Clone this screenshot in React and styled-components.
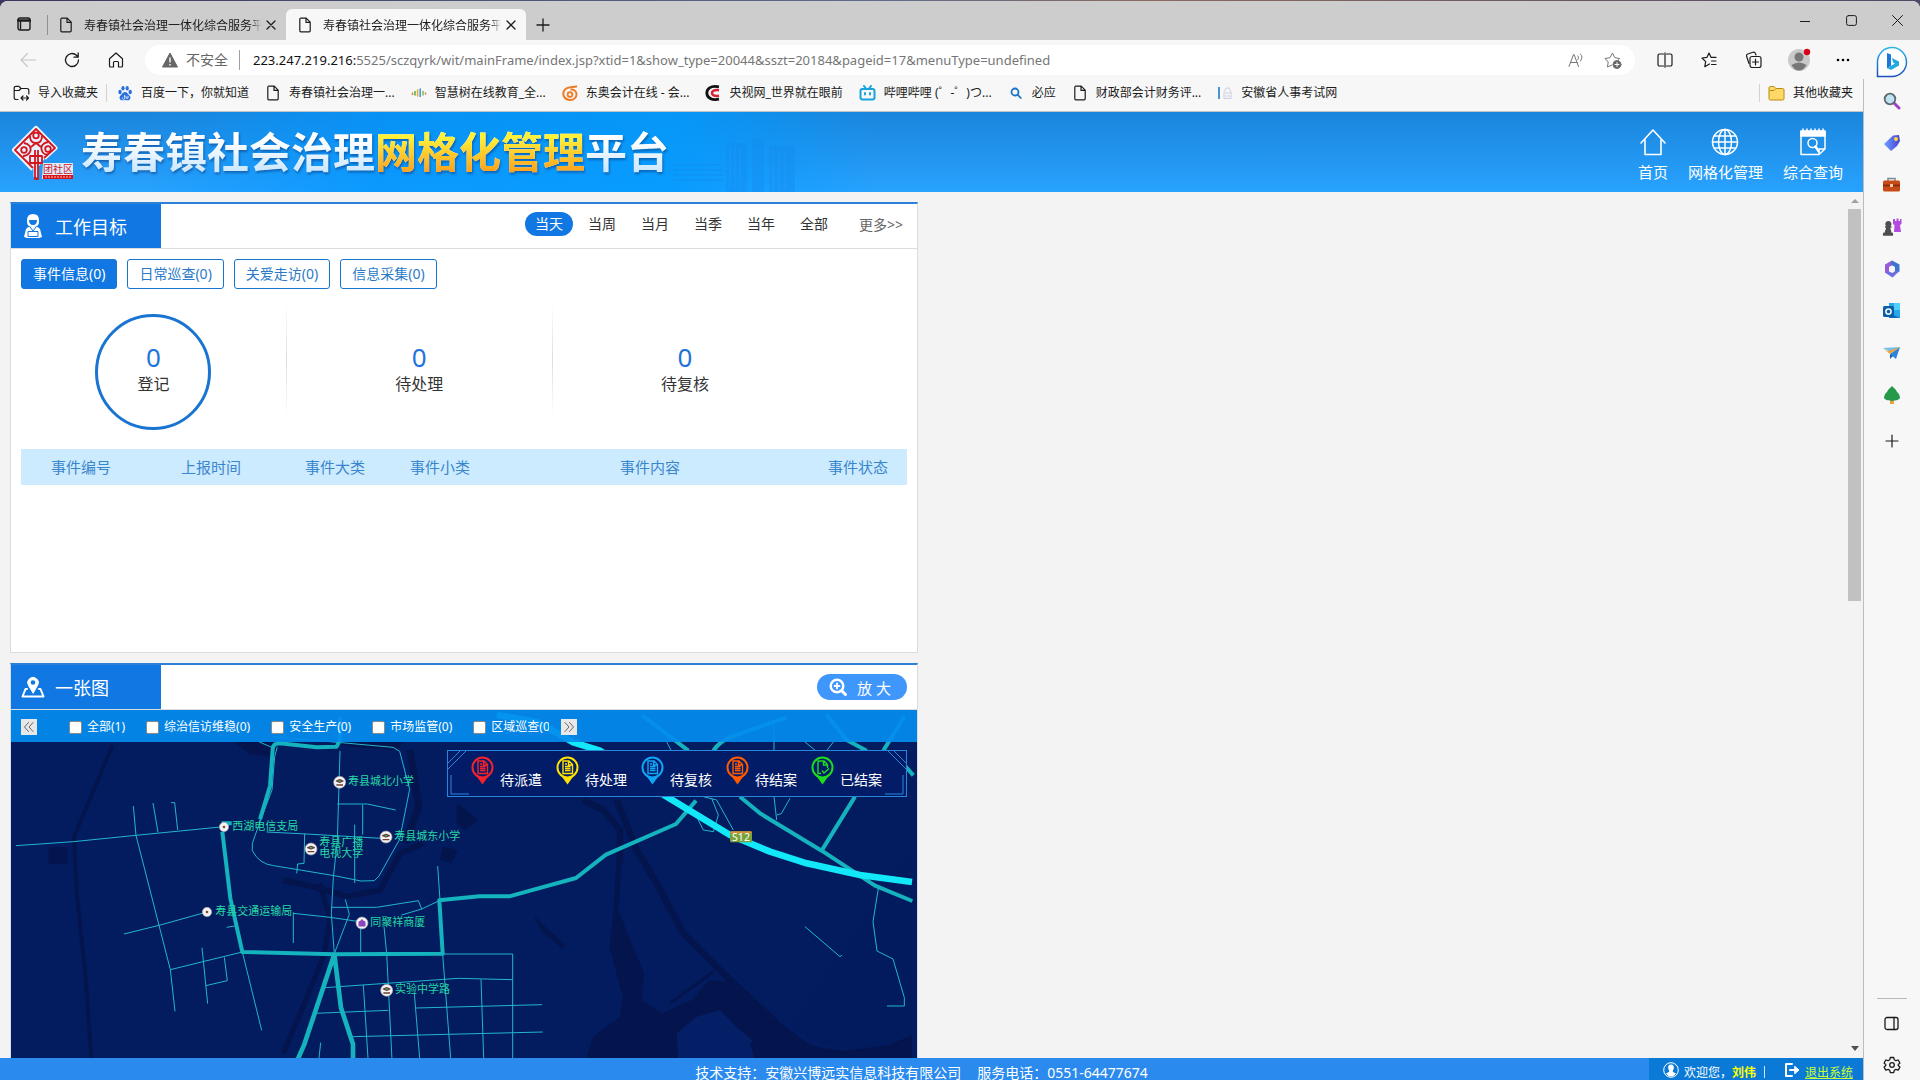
import React from 'react';
import styled, { createGlobalStyle, css } from 'styled-components';

const Global = createGlobalStyle`
  * { box-sizing: border-box; }
  html, body, #root { height: 100%; }
  body {
    margin: 0;
    overflow: hidden;
    background: #4a4a5c;
    color: #1b1b1b;
    font-family: "Noto Sans", "Noto Sans CJK SC", sans-serif;
    font-size: 12px;
  }
  button, input { font: inherit; margin: 0; }
  button { border: 0; padding: 0; background: none; color: inherit; cursor: pointer; }
  a { color: inherit; text-decoration: none; }
  svg { display: block; flex: none; }
`;

/* ---------- browser chrome ---------- */

const Desktop = styled.div`
  height: 100%;
  padding-top: 1px;
  background: linear-gradient(90deg, #3a3560, #5d6b8c 45%, #8a6a60 60%, #4e4a66);
`;

const Browser = styled.div`
  height: 100%;
  display: flex;
  flex-direction: column;
  background: #f7f7f7;
  border-radius: 8px 8px 0 0;
  overflow: hidden;
`;

const TabStrip = styled.header`
  height: 39px;
  flex: none;
  display: flex;
  align-items: flex-end;
  background: #cdcdcd;
`;

const StripButton = styled.button`
  width: 47px;
  height: 32px;
  display: grid;
  place-items: center;
`;

const NewTab = styled(StripButton)`
  width: 34px;
  height: 31px;
`;

const Tab = styled.div`
  width: 240px;
  height: 31px;
  display: flex;
  align-items: center;
  gap: 10px;
  padding: 0 7px 0 11px;
  background: ${(p) => (p.$active ? '#f7f7f7' : 'transparent')};
  border-radius: 6px 6px 0 0;
  ${(p) => !p.$active && css`
    width: 239px;
    &::before { content: ''; width: 1px; height: 20px; margin-left: -11px; background: #8f8f8f; }
  `}
`;

const TabTitle = styled.span`
  flex: 1;
  min-width: 0;
  overflow: hidden;
  white-space: nowrap;
  mask-image: linear-gradient(90deg, #000 94%, transparent);
`;

const CloseTab = styled.button`
  width: 16px;
  height: 16px;
  margin-left: -8px;
  display: grid;
  place-items: center;
`;

const WindowControls = styled.div`
  margin-left: auto;
  display: flex;
  align-self: flex-start;
`;

const WindowButton = styled.button`
  width: 46px;
  height: 39px;
  display: grid;
  place-items: center;
`;

const ChromeBody = styled.div`
  flex: 1;
  min-height: 0;
  display: flex;
`;

const Viewport = styled.div`
  flex: 1;
  min-width: 0;
  display: flex;
  flex-direction: column;
`;

const Toolbar = styled.div`
  height: 39px;
  flex: none;
  display: flex;
  align-items: center;
  padding-left: 6px;
`;

const ToolButton = styled.button`
  width: ${(p) => p.$w || 44}px;
  height: 32px;
  display: grid;
  place-items: center;
`;

const AddressBar = styled.div`
  flex: 1;
  min-width: 0;
  height: 30px;
  display: flex;
  align-items: center;
  margin: 0 8px 0 7px;
  padding: 0 4px 0 17px;
  background: #fff;
  border-radius: 15px;
`;

const Warning = styled.span`
  display: flex;
  align-items: center;
  gap: 8px;
  padding-right: 11px;
  border-right: 1px solid #a0a0a0;
  color: #666;
  font-size: 14px;
  line-height: 20px;
`;

const Url = styled.span`
  flex: 1;
  margin-left: 13px;
  overflow: hidden;
  white-space: nowrap;
  color: #767676;
  font-size: 13px;
  b { font-weight: 400; color: #111; }
`;

const Bookmarks = styled.nav`
  height: 33px;
  flex: none;
  display: flex;
  align-items: center;
  gap: 16px;
  padding: 0 10px 4px 13px;
  border-bottom: 1px solid #c4c4c4;
  border-right: 1px solid #bdbdbd;
  margin-right: -1px;
`;

const Bookmark = styled.a`
  display: flex;
  align-items: center;
  gap: 8px;
  white-space: nowrap;
  line-height: 20px;
  ${(p) => p.$split && css`
    &::after { content: ''; width: 1px; height: 18px; margin-right: -6px; background: #d2d2d2; }
  `}
  ${(p) => p.$end && css`
    margin-left: auto;
    &::before { content: ''; width: 1px; height: 18px; background: #d2d2d2; }
  `}
`;

const EdgeBar = styled.aside`
  width: 57px;
  flex: none;
  display: flex;
  flex-direction: column;
  align-items: center;
  padding: 4px 0 0;
`;

const EdgeButton = styled.button`
  width: 32px;
  height: ${(p) => p.$h || 42}px;
  flex: none;
  display: grid;
  place-items: center;
  &:nth-child(10) { height: 50px; }
`;

const EdgeFoot = styled.div`
  margin-top: auto;
  border-top: 1px solid #b8b8b8;
  padding-top: 3px;
  width: 30px;
  display: flex;
  flex-direction: column;
  align-items: center;
  margin-bottom: -6px;
`;

/* ---------- site ---------- */

const Site = styled.div`
  flex: 1;
  min-height: 0;
  display: flex;
  flex-direction: column;
  background: #f3f3f3;
  border-right: 1px solid #bdbdbd;
  margin-right: -1px;
`;

const Banner = styled.header`
  height: 80px;
  flex: none;
  display: flex;
  align-items: center;
  padding: 0 10px 0 12px;
  background:
    linear-gradient(90deg, transparent 8%, rgba(0, 150, 255, 0.7) 20%, rgba(0, 155, 255, 0.8) 36%, transparent 47%),
    linear-gradient(#1b85dc, #28a2ff);
`;

const SiteTitle = styled.h1`
  margin: 0 0 0 7px;
  font-size: 42px;
  line-height: 60px;
  font-weight: 700;
  white-space: nowrap;
  color: transparent;
  background: linear-gradient(#fff 30%, #c9e6ff 85%);
  background-clip: text;
  filter: drop-shadow(1px 2px 1px rgba(10, 60, 130, 0.55));
`;

const TitleAccent = styled.span`
  background: linear-gradient(#fff13a 25%, #ffa21c 85%);
  background-clip: text;
`;

const Skyline = styled.svg`
  align-self: flex-end;
  margin-left: 4px;
`;

const SiteNav = styled.nav`
  margin-left: auto;
  display: flex;
`;

const NavLink = styled.a`
  display: flex;
  flex-direction: column;
  align-items: center;
  gap: 5px;
  padding: 6px 10px 0;
  color: #fff;
  font-size: 15px;
  line-height: 22px;
`;

const Scroller = styled.div`
  flex: 1;
  min-height: 0;
  display: flex;
`;

const Panels = styled.main`
  flex: 1;
  min-width: 0;
  overflow: hidden;
  display: grid;
  grid-template-columns: 1fr 1fr;
  align-content: start;
  gap: 10px;
  padding: 10px 12px 0 10px;
`;

const Track = styled.div`
  width: 15px;
  flex: none;
  display: flex;
  flex-direction: column;
  align-items: center;
  padding: 7px 2px 7px 0;
`;

const Thumb = styled.div`
  width: 13px;
  height: 46%;
  margin: 6px 0 auto;
  background: #c1c1c1;
`;

const Arrow = styled.div`
  border: 4px solid transparent;
  border-top-width: 0;
  border-bottom: 4px solid #a0a0a0;
  ${(p) => p.$down && css`
    border-bottom: 0;
    border-top: 5px solid #505050;
  `}
`;

const Panel = styled.section`
  grid-column: 1;
  min-width: 0;
  background: #fff;
  border: 1px solid #d8dde2;
  border-top: 2px solid #2d80d8;
`;

const PanelHead = styled.div`
  height: 45px;
  display: flex;
  align-items: center;
  justify-content: space-between;
  padding-right: 10px;
  border-bottom: 1px solid #d8dde2;
`;

const PanelTitle = styled.h2`
  width: 150px;
  height: 44px;
  margin: 0;
  display: flex;
  align-items: center;
  gap: 10px;
  padding: 0 0 1px 10px;
  background: #1177e2;
  color: #fff;
  font-size: 18px;
  font-weight: 400;
`;

const Periods = styled.div`
  display: flex;
  align-items: center;
  gap: 5px;
  padding-bottom: 4px;
  font-size: 14px;
`;

const Period = styled.button`
  width: 48px;
  height: 24px;
  line-height: 24px;
  border-radius: 12px;
  color: ${(p) => (p.$on ? '#fff' : '#333')};
  background: ${(p) => (p.$on ? '#1177e2' : 'transparent')};
`;

const More = styled.a`
  width: 48px;
  margin-left: 16px;
  color: #666;
`;

const PanelBody = styled.div`
  min-height: 403px;
  padding: 10px;
`;

const Kinds = styled.div`
  display: flex;
  gap: 10px;
`;

const Kind = styled.button`
  height: 30px;
  padding: 0 11px;
  border: 1px solid #1a74cc;
  border-radius: 3px;
  font-size: 14px;
  line-height: 28px;
  color: ${(p) => (p.$on ? '#fff' : '#2a7ac8')};
  background: ${(p) => (p.$on ? '#1177e2' : '#fff')};
`;

const Stats = styled.div`
  display: flex;
  padding-top: 15px;
`;

const Stat = styled.div`
  width: 30%;
  height: 112px;
  display: flex;
  justify-content: center;
  padding-top: 10px;
  border-right: 1px solid;
  border-image: linear-gradient(#fff, #ddd 50%, #fff) 1;
  &:last-child { border-image: none; border-color: transparent; }
`;

const StatDisc = styled.div`
  width: 116px;
  height: 116px;
  display: flex;
  flex-direction: column;
  align-items: center;
  padding-top: 24px;
  border: 3px solid ${(p) => (p.$on ? '#1a74d2' : 'transparent')};
  border-radius: 50%;
  color: #333;
  font-size: 16px;
  line-height: 22px;
  strong {
    color: #1f74da;
    font-size: 26px;
    line-height: 32px;
    font-weight: 400;
  }
`;

const EventTable = styled.table`
  width: 100%;
  margin-top: 33px;
  border-collapse: collapse;
  table-layout: fixed;
  th {
    height: 36px;
    padding: 0 0 2px;
    background: #ccebfe;
    color: #3a86cc;
    font-size: 15px;
    font-weight: 400;
  }
`;

const Enlarge = styled.button`
  width: 90px;
  height: 26px;
  display: flex;
  align-items: center;
  gap: 10px;
  padding-left: 12px;
  border-radius: 13px;
  background: #3f96fb;
  color: #fff;
  font-size: 15px;
`;

const MapBox = styled.div`
  position: relative;
  height: 400px;
  overflow: hidden;
  background: #031c60;
`;

const MapCanvas = styled.svg`
  position: absolute;
  inset: 0;
  width: 100%;
  height: 100%;
`;

const LayerBar = styled.div`
  position: absolute;
  inset: 0 0 auto;
  height: 32px;
  display: flex;
  align-items: center;
  padding: 2px 10px 0;
  background: rgba(3, 140, 238, 0.93);
  color: #fff;
`;

const Pager = styled.button`
  width: 16px;
  height: 16px;
  display: grid;
  place-items: center;
  background: #e8e8e8;
`;

const Layers = styled.div`
  width: 512px;
  display: flex;
  gap: 21px;
  margin-right: 12px;
  padding-left: 32px;
  overflow: hidden;
`;

const Layer = styled.label`
  display: flex;
  align-items: center;
  gap: 5px;
  flex: none;
  line-height: 18px;
  input {
    appearance: none;
    width: 13px;
    height: 13px;
    border: 1px solid #8a8a8a;
    border-radius: 2px;
    background: #fff;
  }
`;

const Legend = styled.div`
  position: absolute;
  top: 40px;
  right: 10px;
  width: 460px;
  height: 47px;
  display: flex;
  padding-left: 23px;
  background: #031c68;
  border: 1px solid #2a86dc;
`;

const LegendFrame = styled.svg`
  position: absolute;
  inset: 0;
  width: 100%;
  height: 100%;
`;

const LegendItem = styled.span`
  width: 85px;
  display: flex;
  align-items: flex-start;
  gap: 6px;
  padding-top: 5px;
  color: #fff;
  font-size: 14px;
  line-height: 20px;
  span { padding-top: 14px; }
`;

const Footer = styled.footer`
  height: 22px;
  flex: none;
  display: grid;
  grid-template-columns: 214px 1fr 214px;
  background: #2a8aee;
  color: #fff;
  font-size: 14px;
  line-height: 30px;
  overflow: hidden;
`;

const Support = styled.div`
  grid-column: 2;
  display: flex;
  justify-content: center;
  gap: 16px;
  padding-right: 20px;
`;

const User = styled.div`
  height: 30px;
  display: flex;
  align-items: center;
  padding-left: 14px;
  background: #0b7ad6;
  font-size: 12px;
  svg { margin: 0 5px 6px 0; }
  b { color: #ff0; }
  i { width: 1px; height: 12px; margin: 0 19px 2px 8px; background: #cfe6ff; }
  a { color: #c8ff32; text-decoration: underline; }
`;

/* ---------- icons ---------- */

const Line = ({ s = 16, vb = 16, c = '#1b1b1b', w = 1, children }) => (
  <svg width={s} height={s} viewBox={`0 0 ${vb} ${vb}`} fill="none" stroke={c} strokeWidth={w} strokeLinecap="round" strokeLinejoin="round">{children}</svg>
);

const PageIcon = () => (
  <Line w={1.2}><path d="M3.5 1.2h5.7l4 4v8.6a1 1 0 0 1-1 1H3.8a1 1 0 0 1-1-1V2.2a1 1 0 0 1 .7-1zM9 1.4v4h4" /></Line>
);
const XIcon = () => <Line s={10} vb={10} w={1.3}><path d="M1 1l8 8M9 1L1 9" /></Line>;

const BookmarkIcon = ({ kind }) => {
  switch (kind) {
    case 'import':
      return <Line s={17} vb={17} w={1.2}><path d="M5 14.5H3A1.8 1.8 0 0 1 1.2 12.7V3A1.7 1.7 0 0 1 3 1.3h3L8 3.5h6A1.8 1.8 0 0 1 15.8 5.3V9M1.2 5.500H6L8 3.500M8 13h7.500M10 11l-2 2 2 2M13.500 11l2 2-2 2" /></Line>;
    case 'baidu':
      return (
        <svg width="16" height="16" viewBox="0 0 16 16" fill="#2a6fe0">
          <ellipse cx="3" cy="7" rx="1.7" ry="2.2" /><ellipse cx="6" cy="3.2" rx="1.6" ry="2.3" />
          <ellipse cx="10.2" cy="3.2" rx="1.6" ry="2.3" /><ellipse cx="13.2" cy="7" rx="1.7" ry="2.2" />
          <path d="M8 7c2 0 3 2.2 4.5 3.5 2 2 .5 5-1.7 4.8-1-.1-1.8-.4-2.8-.4s-1.8.3-2.8.4C3 15.500 1.500 12.500 3.500 10.500 5 9.2 6 7 8 7z" />
          <path d="M5.500 12.500a1.2 1.2 0 1 0 2 0V10M9 10.8v2.4h2v-2.4" stroke="#fff" strokeWidth=".8" fill="none" />
        </svg>
      );
    case 'tree':
      return <svg width="16" height="16" viewBox="0 0 16 16" strokeWidth="1.6" strokeLinecap="round"><path d="M1.500 8v1.500M14.500 8v1" stroke="#e58a3a" /><path d="M4 6.500V10" stroke="#5ab35a" /><path d="M6.6 5v6" stroke="#e8b030" /><path d="M9.2 4v7.500" stroke="#4a9ad8" /><path d="M12 6.500V10" stroke="#7ac070" /></svg>;
    case 'dongao':
      return <svg width="16" height="16" viewBox="0 0 16 16" fill="none" stroke="#ee7b26"><path d="M15 1.200C11 2.800 5 .5 2.200 5.500S3.500 15 8 15s6.500-3 6.500-6S11.500 4 8.500 4.500" strokeWidth="2" /><circle cx="8" cy="9.600" r="2.400" strokeWidth="1.800" /></svg>;
    case 'cctv':
      return <svg width="16" height="16" viewBox="0 0 16 16" fill="none"><path d="M14 1.800C5 .2 1.800 4 1.800 8S6 15.800 14 14.200" stroke="#111" strokeWidth="2.800" /><path d="M14 5.200C9 4.500 7 6 7 8s2 3.500 7 2.800" stroke="#d8213a" strokeWidth="2.600" /></svg>;
    case 'bili':
      return <svg width="17" height="16" viewBox="0 0 17 16" fill="none" stroke="#18a3dc" strokeWidth="2" strokeLinecap="round"><rect x="1.500" y="4" width="14" height="10.500" rx="2" /><path d="M5 1l2 2.500M12 1l-2 2.500M6 8v1.500M11 8v1.500" /></svg>;
    case 'bing':
      return <Line c="#1b73c8" w={1.8}><circle cx="7" cy="7" r="3.500" /><path d="M9.800 9.800l3 3.200" /></Line>;
    case 'anhui':
      return <svg width="16" height="16" viewBox="0 0 16 16"><path d="M1 2h2v12H1z" fill="#4a94d2" /><path d="M7 13.500V7l2-4h3l2 4v6.500zM8 8h5M8 11h5" fill="none" stroke="#c9cfe0" /></svg>;
    case 'folder':
      return <svg width="17" height="16" viewBox="0 0 17 16" stroke="#b98a12" strokeWidth="1"><path d="M1 3a1.500 1.500 0 0 1 1.500-1.500H6L8 3.500h6.500A1.500 1.500 0 0 1 16 5v8.500a1.500 1.500 0 0 1-1.500 1.500h-12A1.500 1.500 0 0 1 1 13.500z" fill="#ffd968" /><path d="M1.500 5.500H6l2-2" fill="none" /></svg>;
    default:
      return <PageIcon />;
  }
};

const Logo = () => (
  <svg width="62" height="58" viewBox="0 0 62 58" fill="none">
    <g stroke="#eaf4ff" strokeWidth="5" strokeLinejoin="round">
      <path d="M21 46L2.500 27 24 5.500 43 25 32 35" />
      <path d="M24 32v22" />
    </g>
    <path d="M24 8L5 27l16 16h6l14-18z" fill="#e6f1fd" />
    <path d="M31 40h30v16H30z" fill="#dcecfb" />
    <g stroke="#d5141c" strokeWidth="1.800" strokeLinejoin="round">
      <path d="M21 45L3 27 24 6l19 19-11 10" />
      <circle cx="24" cy="12.500" r="2.800" />
      <path d="M18 13c0 5 2 7 6 7s6-2 6-7" />
      <circle cx="12" cy="27" r="2.800" />
      <path d="M12 20c5 1 8 4 6 9-2 3-5 4-7 4" />
      <circle cx="36" cy="26" r="2.800" />
      <path d="M36 19c-5 1-8 4-6 9 1 3 4 4 6 3" />
      <path d="M19 24l5-4 5 4M18 33h12v7H18zM23 27v29h3V27" />
    </g>
    <text x="31" y="50" fontSize="10" fill="#d5141c">团社区</text>
    <path d="M31 52h30v4H31z" fill="#d5141c" />
    <path d="M33 54h26" stroke="#ffc2b6" strokeDasharray="2 1" />
  </svg>
);

const Pin = ({ color, done }) => (
  <svg width="23" height="29" viewBox="0 0 23 29" fill="none">
    <path d="M4 18h15l-7.500 10.500z" fill={color} />
    <circle cx="11.500" cy="11.500" r="10" fill="#031c68" stroke={color} strokeWidth="2" />
    {done
      ? <path d="M16.500 12V8.500L13 5H7v12.500h3M12.500 5v4h4M11 14.500l2 2.500 5-4.500" stroke={color} strokeWidth="1.400" />
      : <path d="M7 5h6l3.500 3.500V17.500H7zM12.500 5v4h4M9 8h2M9 10.500h5.500M9 12.500h5.500M9 14.500h5.500" stroke={color} strokeWidth="1.400" />}
  </svg>
);

const edgeIcons = [
  <svg key="s" width="18" height="18" viewBox="0 0 18 18"><path d="M11 11l5 5" stroke="#a33fc4" strokeWidth="3" strokeLinecap="round" /><circle cx="7" cy="7" r="5.300" fill="#bfe3f2" stroke="#5d6870" strokeWidth="1.800" /></svg>,
  <svg key="t" width="18" height="18" viewBox="0 0 18 18"><defs><linearGradient id="tag"><stop stopColor="#6aa4ff" /><stop offset="1" stopColor="#4a3fd8" /></linearGradient></defs><path d="M10 1.500L16 1l1 6-3 5-6 5-7-7z" fill="url(#tag)" /><circle cx="13" cy="5" r="2" fill="#ffd93b" /></svg>,
  <svg key="b" width="19" height="16" viewBox="0 0 19 16"><path d="M6 4V1.500h7V4" fill="none" stroke="#7b8a90" strokeWidth="1.500" /><rect x="1" y="3.500" width="17" height="11" rx="1.500" fill="#c84a18" /><path d="M1 7.500h17v2H1z" fill="#8c2c0e" /><rect x="8" y="7" width="3" height="3" fill="#f0c9a0" /></svg>,
  <svg key="c" width="20" height="20" viewBox="0 0 20 20"><path d="M11 2h2v2h1.500V1.500h2V4H18V2h1.500v5L18 8l1 7h-7l.5-7-1.500-1z" fill="#b44be0" /><path d="M6.500 4a3 3 0 0 1 2 5.200h1v1.500H8.300l1.200 5h1.500v3H1v-3h1.500l1.700-5H3V9.200h1.200A3 3 0 0 1 6.500 4z" fill="#4e4e52" /></svg>,
  <svg key="m" width="18" height="18" viewBox="0 0 18 18"><path d="M9 .5L2 4.500v8l4 2V7l5-3z" fill="#9a5bd8" /><path d="M9 .5l7.500 4v7L12 13.500V7L7.500 4.500z" fill="#3f74d0" /><path d="M16.500 11L9.500 17.500 2 12.500l4-1 3.500 1.500L12 11z" fill="#6f6fe0" /><circle cx="9.200" cy="9" r="2.800" fill="#f7f7f7" /></svg>,
  <svg key="o" width="18" height="18" viewBox="0 0 18 18"><path d="M6 1h11v15H6z" fill="#28a8ea" /><path d="M11 1h6v7h-6z" fill="#50d0f8" /><path d="M6 11l11 5H6z" fill="#0f6cbd" /><rect x="0" y="4" width="11" height="11" rx="1.500" fill="#0a5ea8" /><circle cx="5.500" cy="9.500" r="2.600" fill="none" stroke="#fff" strokeWidth="1.500" /></svg>,
  <svg key="p" width="18" height="16" viewBox="0 0 18 16"><path d="M0 3l17-1-9 5z" fill="#6cc0f8" /><path d="M17 2l-4 12-6-5z" fill="#2a84dc" /><path d="M0 3l7 6 10-7-12 4z" fill="#e9a43a" /><path d="M7 9v5l3-3z" fill="#1c5fa8" /></svg>,
  <svg key="r" width="18" height="20" viewBox="0 0 18 20"><path d="M7 14h4v5H7z" fill="#e8a23a" /><path d="M9 1c2 2 4 3.500 5 6 2 1.500 3 4 3 6-2 3-5 2-8 3-3-1-6 0-8-3 0-2 1-4.500 3-6 1-2.500 3-4 5-6z" fill="#269a4a" /></svg>,
  <Line key="+" s={14} vb={14} w={1.2}><path d="M7 1v12M1 7h12" /></Line>,
];
const edgeNames = ['搜索', '购物', '工具', '游戏', 'Microsoft 365', 'Outlook', 'Drop', '树', '自定义'];

/* ---------- data ---------- */

const bookmarks = [
  ['import', '导入收藏夹', true],
  ['baidu', '百度一下，你就知道'],
  ['page', '寿春镇社会治理一...'],
  ['tree', '智慧树在线教育_全...'],
  ['dongao', '东奥会计在线 - 会...'],
  ['cctv', '央视网_世界就在眼前'],
  ['bili', '哔哩哔哩 (゜-゜)つ...'],
  ['bing', '必应'],
  ['page', '财政部会计财务评...'],
  ['anhui', '安徽省人事考试网'],
];
const periods = ['当天', '当周', '当月', '当季', '当年', '全部'];
const kinds = ['事件信息(0)', '日常巡查(0)', '关爱走访(0)', '信息采集(0)'];
const stats = ['登记', '待处理', '待复核'];
const columns = [['事件编号', 120], ['上报时间', 140], ['事件大类', 108], ['事件小类', 102], ['事件内容', 318], ['事件状态', 98]];
const layers = ['全部(1)', '综治信访维稳(0)', '安全生产(0)', '市场监管(0)', '区域巡查(0)'];
const legend = [['待派遣', '#f5222d'], ['待处理', '#ffe000'], ['待复核', '#12a5f4'], ['待结案', '#ff5a00'], ['已结案', '#1edc1e']];

const places = [
  [1019, 397, '寿县城北小学', 'school'],
  [1158, 561, '寿县城东小学', 'school'],
  [1160, 1021, '实验中学路', 'school'],
  [672, 531, '西湖电信支局', 'dot'],
  [621, 786, '寿县交通运输局', 'dot'],
  [1086, 819, '同聚祥商厦', 'shop'],
];

function CityMap() {
  return (
    <MapCanvas viewBox="33 180 2718 1200" preserveAspectRatio="xMinYMin slice" fill="none" strokeLinejoin="round">
      <g stroke="#03154c" strokeWidth="12">
        <path d="M338 285L222 560l8 170 26 240 28 400" />
        <path d="M960 700l30 110-20 110-65 160-55 130" strokeWidth="16" />
        <path d="M850 690l90 20 100 30 100-20 60-110 70-30" strokeWidth="18" />
        <path d="M1230 300l26 170-40 110" strokeWidth="22" />
      </g>
      <path d="M700 276h150l-40 44-60-8zM146 590h56v52h-56zM1000 276h210l-20 24-130-8z" fill="#03154c" />
      <g transform="translate(1290 0)">
        <g fill="#03154c">
          <path d="M80 460l30 20 34 30-40 30-24-20zM40 590l44 10-20 40-36-10zM310 795l40 40 56 50-10 10-60-50z" />
          <path d="M560 620l16 0-10 160 30 80 46 110-6 80 60 40 90-40 50-60 80 10 110 100 120 90 160 20 140-30v250H470v-210l20-60 80-60 8-60-40-150 10-80z" />
        </g>
        <path d="M460 450l60 30 50 60 0 100M560 450l60 150 60 100 80 150 120 120 160 150" stroke="#03154c" strokeWidth="20" />
        <path d="M745 1240l-5-90 60-50 70-20 60 60 36 30 6 70z" fill="#041f66" />
        <path d="M980 1240l-20-60 80-30 80 30 100 25 160-20 66-30v100z" fill="#03154c" />
        <path d="M1080 1130l90 50 120 22 120-22 36-30V600z" fill="#031c60" opacity=".01" />
        <path d="M710 1090l60-20 70-60 70-20M720 1060l130-95" stroke="#03154c" strokeWidth="10" />
      </g>
      <g stroke="#22b5cd" strokeWidth="3">
        <path d="M48 587l172-12 188-19 264-26M400 468l8 88 69 270 34 133 14 125M459 459l15 88M513 458h11l9 82" />
        <path d="M372 852l105-26 144-40M880 787v92M880 790l110 12 96 14M511 959l216-53 58 235M606 893l17 168M617 1007l65-15-9-70" />
        <path d="M778 276l38 16M832 290l-8 30-8 100-36 95-23 65 0 22q20 40 64 45l182 30 80 16 40-1 14-14 62-110 30-150-30-114-20-12-200-18-160-14M1020 303l-8 270-12 110-6 108 9 120" />
        <path d="M1012 462h90l85 18M1088 464v90M1064 524v175M914 552l-2 88-19 2-3 28M800 546l120 6 240 14M995 772h135l125-20 10 25-60 18M1036 748l12 45-45 118M1265 777l55-26M1082 830v80M1152 830l8 80 16 320M1313 648l7 103" />
        <path d="M1328 912h210v312M1328 912l24 312M975 1013l170-12 230-16 163 4M945 1090l220-9M1248 1074l378-10M1058 1160l570-14M1090 1005l14 220M1243 1030l16 195M1443 988l8 236M962 1178l-5 46M680 832l24-4" />
        <g transform="translate(1290 0)">
          <path d="M1345 715l-16 100 12 88 48 24 34 116v25h-52M1125 830l105 90 6-5M800 500l20 40 30 5 15-50-20-50M820 440l40 10 50 90M1032 210v230l8 70M1040 495l14-4 26-46M710 276l14 26M1125 276l32 26M1210 276l-20 26" />
        </g>
      </g>
      <g stroke="#14b3be" strokeWidth="12">
        <path d="M1020 200v70l-10 20-60 2-110-12q-22 0-22 18l-8 110-30 100M665 520h30M667 545l24 200 36 161 276 7 325-2-10-160 120-12h90l200-55 90-70 210-92 60-70" />
        <path d="M1003 913l-90 270-22 50M1003 913l20 160 36 110v50" strokeWidth="14" />
        <g transform="translate(1290 0)">
          <path d="M635 195l140 107M850 302q20-30 60-44l160-56M1190 195l60 75 60 32M1424 198l-64 104M930 440l60 50 185 112 160 105 112 46M1175 602l100-162M1410 330l40 46" />
          <path d="M200 195l120 20 110 62 80 25 200 138 190 115 120 50 110 35 160 35 156 21" stroke="#13e8f8" strokeWidth="20" />
        </g>
      </g>
      <rect x="2190" y="544" width="66" height="33" rx="4" fill="#79a33a" />
      <path d="M2190 550q0-6 6-6h54q6 0 6 6z" fill="#d88f35" />
      <text x="2223" y="573" fontSize="32" fill="#fff" textAnchor="middle">S12</text>
      <g fontSize="33" fill="#27d8a4">
        {places.map(([x, y, name, kind]) => (
          <g key={name}>
            <circle cx={x} cy={y} r={kind === 'dot' ? 14 : 18} fill="#f6f2f0" stroke="#9aa0b0" strokeWidth="2" />
            {kind === 'dot' && <circle cx={x} cy={y} r="4" fill="#7b4a3a" />}
            {kind === 'school' && <path d={`M${x - 10} ${y + 8}h20M${x - 10} ${y - 4}l10-4 10 4-10 4z`} stroke="#6b4038" strokeWidth="4" />}
            {kind === 'shop' && <path d={`M${x - 9} ${y - 4}h18v13h-18zM${x - 5} ${y - 4}q5-12 10 0`} fill="#8a45c0" stroke="#8a45c0" strokeWidth="3" />}
            <text x={x + 25} y={y + 8}>{name}</text>
          </g>
        ))}
        <circle cx="933" cy="597" r="18" fill="#f6f2f0" stroke="#9aa0b0" strokeWidth="2" />
        <path d="M923 605h20M923 593l10-4 10 4-10 4z" stroke="#6b4038" strokeWidth="4" />
        <text x="958" y="588">寿县广播</text>
        <text x="958" y="621">电视大学</text>
      </g>
    </MapCanvas>
  );
}

export default function App() {
  return (
    <Desktop>
      <Global />
      <Browser>
        <TabStrip>
          <StripButton aria-label="标签页操作"><Line s={14} vb={14} w={1.4}><rect x="1" y="1" width="12" height="12" rx="2" /><path d="M1 3.500h12" strokeWidth="2.500" /><path d="M3.500 4v8" /></Line></StripButton>
          <Tab><PageIcon /><TabTitle>寿春镇社会治理一体化综合服务平台</TabTitle><CloseTab aria-label="关闭"><XIcon /></CloseTab></Tab>
          <Tab $active><PageIcon /><TabTitle>寿春镇社会治理一体化综合服务平台</TabTitle><CloseTab aria-label="关闭"><XIcon /></CloseTab></Tab>
          <NewTab aria-label="新建标签页"><Line s={14} vb={14} w={1.3}><path d="M7 1v12M1 7h12" /></Line></NewTab>
          <WindowControls>
            <WindowButton aria-label="最小化"><Line s={10} vb={10}><path d="M0 5.500h10" /></Line></WindowButton>
            <WindowButton aria-label="最大化"><Line s={11} vb={11}><rect x=".6" y=".6" width="9.800" height="9.800" rx="1.800" /></Line></WindowButton>
            <WindowButton aria-label="关闭窗口"><Line s={11} vb={11}><path d="M.5.5l10 10M10.500.5l-10 10" /></Line></WindowButton>
          </WindowControls>
        </TabStrip>
        <ChromeBody>
          <Viewport>
            <Toolbar>
              <ToolButton aria-label="后退"><Line c="#c6c6c6" w={1.1}><path d="M15.500 8H1M7.500 1.500L1 8l6.500 6.500" /></Line></ToolButton>
              <ToolButton aria-label="刷新"><Line w={1.3}><path d="M14.500 8A6.500 6.500 0 1 1 12.500 3.300L14 5M14.200 1v4.200H10" /></Line></ToolButton>
              <ToolButton aria-label="主页"><Line w={1.2}><path d="M1.500 6.800L8 1l6.500 5.800V14a1 1 0 0 1-1 1h-3v-4.500a1 1 0 0 0-1-1h-3a1 1 0 0 0-1 1V15h-3a1 1 0 0 1-1-1z" /></Line></ToolButton>
              <AddressBar>
                <Warning>
                  <svg width="16" height="16" viewBox="0 0 16 16"><path d="M8 1l7.500 14H.5z" fill="#666" stroke="#666" strokeLinejoin="round" /><path d="M8 5.500v5M8 12v1.500" stroke="#fff" strokeWidth="1.400" /></svg>
                  不安全
                </Warning>
                <Url><b>223.247.219.216:</b>5525/sczqyrk/wit/mainFrame/index.jsp?xtid=1&amp;show_type=20044&amp;sszt=20184&amp;pageid=17&amp;menuType=undefined</Url>
                <ToolButton $w={38} aria-label="大声朗读"><Line c="#767676"><path d="M1 14.500L5.500 2.500h.6L10.500 14.500M2.500 10.500h6.800M10 4q1.500 1.500 0 3.500M12.500 2q3 3 0 7" /></Line></ToolButton>
                <ToolButton $w={36} aria-label="加入收藏"><Line s={18} vb={18} c="#767676"><path d="M8 14l-4.500 2 .7-5L1 7.500l5-.8L8.500 2l2.300 4.700 5 .8-1.500 1.500" /><circle cx="13" cy="13.500" r="4" fill="#666" /><path d="M13 11.500v4M11 13.500h4" stroke="#fff" /></Line></ToolButton>
              </AddressBar>
              <ToolButton aria-label="分屏"><Line w={1.2}><path d="M6.500 2H2.500A1.500 1.500 0 0 0 1 3.500v9A1.500 1.500 0 0 0 2.500 14h4M9.500 2h4A1.500 1.500 0 0 1 15 3.500v9a1.500 1.500 0 0 1-1.500 1.500h-4M8 .8v14.400" /></Line></ToolButton>
              <ToolButton aria-label="收藏夹"><Line w={1.2}><path d="M8.500 12l-4.700 2.700.9-5.100L1 6l5-.7L8 1l2 4.300h5M10.500 9h4.500M10.500 12.500h4.500" /></Line></ToolButton>
              <ToolButton aria-label="集锦"><Line s={17} vb={17} w={1.2}><path d="M4 12.500L1.500 5A1.800 1.800 0 0 1 2.700 3L8 1.200a1.800 1.800 0 0 1 2.300 1.200L11 4" /><rect x="5" y="5.500" width="11" height="11" rx="2" /><path d="M10.500 8v6M7.500 11h6" /></Line></ToolButton>
              <ToolButton $w={48} aria-label="个人资料">
                <svg width="24" height="24" viewBox="0 0 24 24"><circle cx="12" cy="12" r="11" fill="#c9c9c9" /><circle cx="12" cy="9" r="4.500" fill="#777" /><path d="M4.500 17q7.500-5 15 0-3 5.500-7.500 5.500T4.500 17z" fill="#777" /><circle cx="20" cy="4" r="3.200" fill="#d8001c" /></svg>
              </ToolButton>
              <ToolButton $w={40} aria-label="设置及其他"><svg width="14" height="4" viewBox="0 0 14 4"><circle cx="2" cy="2" r="1.300" /><circle cx="7" cy="2" r="1.300" /><circle cx="12" cy="2" r="1.300" /></svg></ToolButton>
            </Toolbar>
            <Bookmarks>
              {bookmarks.map(([kind, name, split]) => (
                <Bookmark href="#" key={kind + name} $split={split}><BookmarkIcon kind={kind} />{name}</Bookmark>
              ))}
              <Bookmark href="#" $end><BookmarkIcon kind="folder" />其他收藏夹</Bookmark>
            </Bookmarks>
            <Site>
              <Banner>
                <Logo />
                <SiteTitle>寿春镇社会治理<TitleAccent>网格化管理</TitleAccent>平台</SiteTitle>
                <Skyline width="130" height="64" viewBox="0 0 130 64" fill="#1487ec" opacity=".3">
                  <path d="M0 36h50v2H0zM0 41h50v2H0zM0 46h50v2H0zM0 51h50v2H0zM53 15h21v49H53zM79 10h12v54H79zM96 18h26v46H96z" />
                  <path d="M57 19v40M62 19v40M67 19v40M100 22v40M106 22v40M112 22v40" stroke="#2a9cf8" />
                </Skyline>
                <SiteNav>
                  <NavLink href="#"><Line s={28} vb={28} c="#fff" w={1.6}><path d="M2 15L14 2l12 13M6 12v14.500h16V12" /></Line>首页</NavLink>
                  <NavLink href="#"><Line s={28} vb={28} c="#fff" w={1.5}><circle cx="14" cy="14" r="12.500" /><ellipse cx="14" cy="14" rx="6.500" ry="12.500" /><path d="M14 1.500v25M1.500 14h25M3.500 8h21M3.500 20h21" /></Line>网格化管理</NavLink>
                  <NavLink href="#"><Line s={28} vb={28} c="#fff" w={1.5}><path d="M2 3.500h24V21l-6 5.500H2zM20 26v-5h6" /><path d="M2 3h24v5H2z" fill="#fff" /><path d="M4 1v2M8 1v2M12 1v2M16 1v2M20 1v2M24 1v2" /><circle cx="13.500" cy="15" r="4.500" /><path d="M16.500 18.500l3 4.500" strokeWidth="2.500" /></Line>综合查询</NavLink>
                </SiteNav>
              </Banner>
              <Scroller>
                <Panels>
                  <Panel>
                    <PanelHead>
                      <PanelTitle>
                        <svg width="24" height="26" viewBox="0 0 24 26" fill="#fff"><path d="M6 7q0-6 6-6t6 6v2q0 5-6 5T6 9z" /><path d="M8 7h8q0 5-4 5T8 7z" fill="#1177e2" /><path d="M3 24l2-8q2-3 7-2 5-1 7 2l2 8-3 1H6z" /><path d="M9 14l3 4 3-4M7 18.500h10v5H7z" fill="#fff" stroke="#1177e2" /></svg>
                        工作目标
                      </PanelTitle>
                      <Periods>
                        {periods.map((p, i) => <Period key={p} $on={i === 0}>{p}</Period>)}
                        <More href="#">更多&gt;&gt;</More>
                      </Periods>
                    </PanelHead>
                    <PanelBody>
                      <Kinds>{kinds.map((k, i) => <Kind key={k} $on={i === 0}>{k}</Kind>)}</Kinds>
                      <Stats>
                        {stats.map((s, i) => (
                          <Stat key={s}><StatDisc $on={i === 0}><strong>0</strong>{s}</StatDisc></Stat>
                        ))}
                      </Stats>
                      <EventTable>
                        <colgroup>{columns.map(([name, w]) => <col key={name} width={w} />)}</colgroup>
                        <thead><tr>{columns.map(([name]) => <th key={name} scope="col">{name}</th>)}</tr></thead>
                      </EventTable>
                    </PanelBody>
                  </Panel>
                  <Panel>
                    <PanelHead>
                      <PanelTitle>
                        <Line s={24} vb={24} c="#fff" w={2}><path d="M6 14H4.500L1.500 21.500h21l-3-7.500H18" /><path d="M12 18L7.500 10.500a5.300 5.300 0 1 1 9 0z" fill="#fff" strokeWidth="1" /><circle cx="12" cy="7.500" r="2.300" fill="#1177e2" stroke="none" /></Line>
                        一张图
                      </PanelTitle>
                      <Enlarge><Line s={18} vb={18} c="#fff" w={2.4}><circle cx="8" cy="8" r="6.300" /><path d="M12.800 12.800L16.500 16.500" strokeWidth="3" /><path d="M8 5.500v5M5.500 8h5" strokeWidth="1.800" /></Line>放 大</Enlarge>
                    </PanelHead>
                    <MapBox>
                      <CityMap />
                      <LayerBar>
                        <Pager aria-label="向左"><Line s={12} vb={12} c="#666"><path d="M5.500 1.500L1.500 6l4 4.500M10 1.500L6 6l4 4.500" /></Line></Pager>
                        <Layers>{layers.map((l) => <Layer key={l}><input type="checkbox" />{l}</Layer>)}</Layers>
                        <Pager aria-label="向右"><Line s={12} vb={12} c="#666"><path d="M2 1.500L6 6l-4 4.500M6.500 1.500l4 4.500-4 4.500" /></Line></Pager>
                      </LayerBar>
                      <Legend>
                        <LegendFrame viewBox="0 0 458 45" fill="none" stroke="#2a86dc"><path d="M0 12L12 0M0 18L18 0M3 24v19h18M458 12L446 0M458 18L440 0M455 24v19h-18" /></LegendFrame>
                        {legend.map(([name, color], i) => (
                          <LegendItem key={name}><Pin color={color} done={i === 4} /><span>{name}</span></LegendItem>
                        ))}
                      </Legend>
                    </MapBox>
                  </Panel>
                </Panels>
                <Track><Arrow /><Thumb /><Arrow $down /></Track>
              </Scroller>
              <Footer>
                <Support><span>技术支持：安徽兴博远实信息科技有限公司</span><span>服务电话：0551-64477674</span></Support>
                <User>
                  <svg width="16" height="16" viewBox="0 0 16 16"><circle cx="8" cy="8" r="7.300" fill="none" stroke="#fff" /><path d="M8 2.500c2.200 0 3 1.500 2.800 3.500-.2 1.500-.8 2.200-1.200 3 .2 1.500 2.400 1.500 3.400 2.500Q11 14.500 8 14.500t-5-3c1-1 3.200-1 3.400-2.500-.4-.8-1-1.500-1.200-3C5 4 5.800 2.500 8 2.500z" fill="#fff" /></svg>
                  欢迎您，<b>刘伟</b><i />
                  <Line s={16} vb={16} c="#fff" w={2}><path d="M8 2H2v12h6" /><path d="M6 8h6" /><path d="M11 4.500L15 8l-4 3.500z" fill="#fff" strokeWidth="1" /></Line>
                  <a href="#">退出系统</a>
                </User>
              </Footer>
            </Site>
          </Viewport>
          <EdgeBar>
            <EdgeButton $h={36} aria-label="必应聊天">
              <svg width="32" height="32" viewBox="0 0 32 32"><defs><linearGradient id="bing" x1="0" y1="0" x2="0" y2="1"><stop stopColor="#2ab4e8" /><stop offset="1" stopColor="#1b4fc0" /></linearGradient></defs><path d="M1.500 30.500V15.500a14.500 14.500 0 1 1 14.500 15z" fill="#fff" stroke="url(#bing)" strokeWidth="1.500" /><path d="M11 7l4 1.500v11l-4 3z" fill="#1b78dc" /><path d="M16 12l7 3.500v4L15 24l-4-2 8-4.500-2-1z" fill="#22a9e0" /></svg>
            </EdgeButton>
            {edgeIcons.map((icon, i) => <EdgeButton key={edgeNames[i]} aria-label={edgeNames[i]}>{icon}</EdgeButton>)}
            <EdgeFoot>
              <EdgeButton aria-label="侧边栏"><Line s={15} vb={15} w={1.3}><rect x="1" y="1.500" width="13" height="12" rx="2" /><path d="M10 1.500v12" /></Line></EdgeButton>
              <EdgeButton aria-label="设置"><Line s={18} vb={18} w={1.3}><path d="M7.300 1.500h3.400l.6 2.300 1.600.9 2.300-.7 1.700 3-1.700 1.600v1l1.700 1.500-1.700 3-2.300-.7-1.600.9-.6 2.300H7.300l-.6-2.300-1.600-.9-2.300.7-1.700-3 1.700-1.500v-1L1.100 7l1.700-3 2.300.7 1.600-.9z" /><circle cx="9" cy="9" r="2.300" /></Line></EdgeButton>
            </EdgeFoot>
          </EdgeBar>
        </ChromeBody>
      </Browser>
    </Desktop>
  );
}
